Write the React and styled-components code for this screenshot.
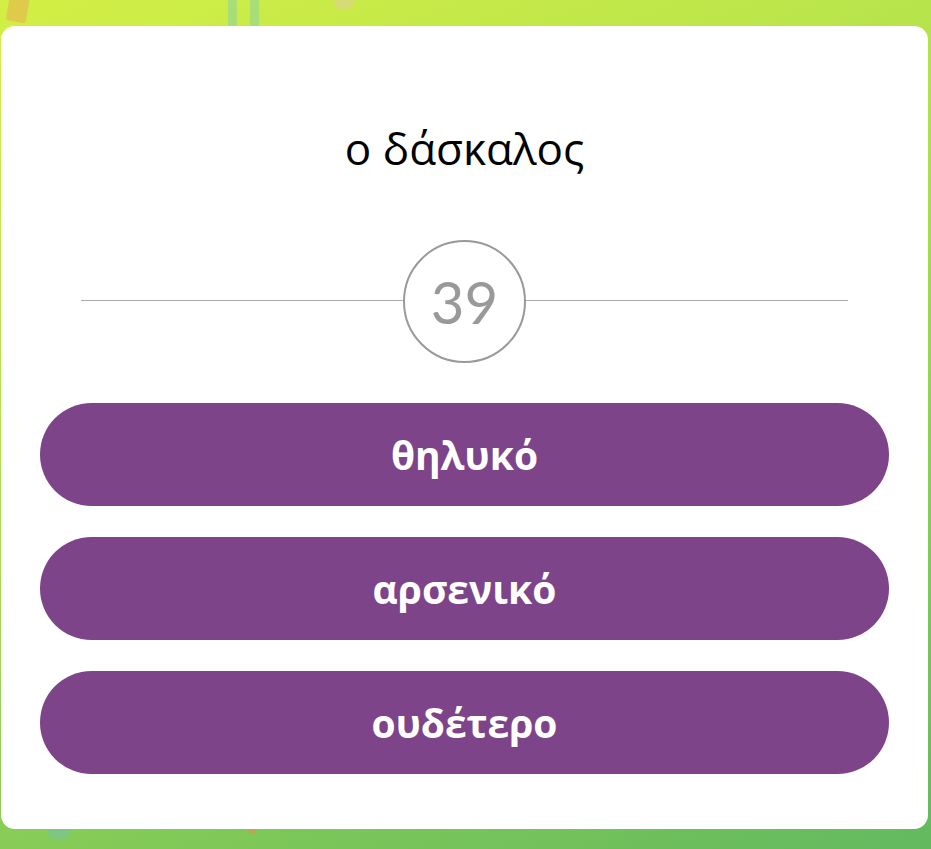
import styled, {createGlobalStyle} from 'styled-components';

const GlobalStyle = createGlobalStyle`
  html, body {
    margin: 0;
    padding: 0;
  }
  body {
    font-family: "Open Sans", "Liberation Sans", sans-serif;
  }
`;

export default function App() {
  return (
    <>
      <GlobalStyle />
      <STYLED_PAGE>
        <Shape $left={9} $top={-18} $w={20} $h={40} $color="#e2c44a" $rot={10} $radius={3} />
        <Shape $left={228} $top={-10} $w={31} $h={50} $color="#a3dc80" $rot={0} $radius={4} $hollow />
        <Shape $left={333} $top={-12} $w={22} $h={22} $color="#d8d87c" $rot={0} $radius={11} />
        <Shape $left={48} $top={822} $w={22} $h={18} $color="#7cc58a" $rot={0} $radius={9} />
        <Shape $left={248} $top={824} $w={8} $h={10} $color="#c7a050" $rot={0} $radius={4} />
        <STYLED_CARD>
          <STYLED_WORD>ο δάσκαλος</STYLED_WORD>
          <STYLED_TIMER>
            <STYLED_CIRCLE>39</STYLED_CIRCLE>
          </STYLED_TIMER>
          <STYLED_ANSWERS>
            <STYLED_ANSWER type="button">θηλυκό</STYLED_ANSWER>
            <STYLED_ANSWER type="button">αρσενικό</STYLED_ANSWER>
            <STYLED_ANSWER type="button">ουδέτερο</STYLED_ANSWER>
          </STYLED_ANSWERS>
        </STYLED_CARD>
      </STYLED_PAGE>
    </>
  );
}

const STYLED_PAGE = styled.div`
  position: relative;
  overflow: hidden;
  width: 931px;
  height: 849px;
  box-sizing: border-box;
  padding: 26px 3px 0 1px;
  background: linear-gradient(160deg, #d3ef45 0%, #a9de4f 45%, #62b95f 100%);
`;

// decorative confetti in the background
const Shape = styled.div`
  position: absolute;
  box-sizing: border-box;
  left: ${({$left}) => $left}px;
  top: ${({$top}) => $top}px;
  width: ${({$w}) => $w}px;
  height: ${({$h}) => $h}px;
  border-radius: ${({$radius}) => $radius}px;
  transform: rotate(${({$rot}) => $rot}deg);
  background: ${({$hollow, $color}) => ($hollow ? 'transparent' : $color)};
  border: ${({$hollow, $color}) => ($hollow ? `9px solid ${$color}` : 'none')};
  opacity: 0.85;
`;

const STYLED_CARD = styled.div`
  position: relative;
  z-index: 1;
  background: #fff;
  border-radius: 14px;
  height: 803px;
  box-sizing: border-box;
  padding: 92px 39px 0 39px;
  display: flex;
  flex-direction: column;
  align-items: stretch;
`;

const STYLED_WORD = styled.h1`
  margin: 0;
  font-family: "Open Sans", sans-serif;
  font-weight: 400;
  font-size: 44px;
  line-height: 60px;
  color: #000;
  text-align: center;
`;

const STYLED_TIMER = styled.div`
  margin: 62px 41px 0 41px;
  display: flex;
  justify-content: center;
  align-items: center;
  position: relative;

  &::before {
    content: '';
    position: absolute;
    left: 0;
    right: 0;
    top: 60px;
    height: 1px;
    background: #aaa;
  }
`;

const STYLED_CIRCLE = styled.div`
  position: relative;
  width: 119px;
  height: 119px;
  border: 2px solid #999;
  border-radius: 50%;
  background: #fff;
  display: flex;
  align-items: center;
  justify-content: center;
  font-family: "Lato", sans-serif;
  font-weight: 400;
  font-size: 58px;
  color: #999;
`;

const STYLED_ANSWERS = styled.div`
  margin-top: 40px;
  display: flex;
  flex-direction: column;
  gap: 31px;
`;

const STYLED_ANSWER = styled.button`
  height: 103px;
  border: 0;
  border-radius: 52px;
  background: #7e4489;
  color: #fff;
  font-family: "Open Sans", "Liberation Sans", sans-serif;
  font-weight: 700;
  font-size: 39px;
  cursor: pointer;
`;
